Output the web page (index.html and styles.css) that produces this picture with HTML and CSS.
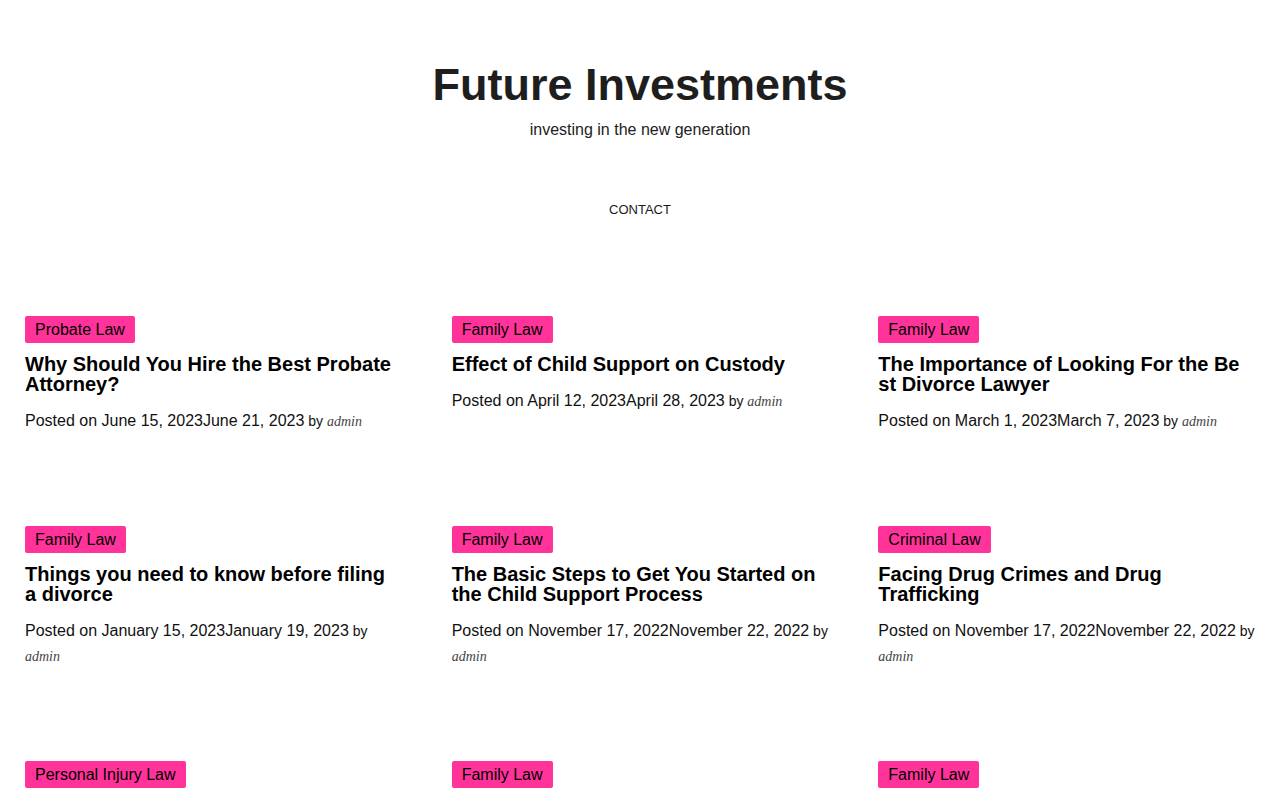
FILE: index.html
```html
<!DOCTYPE html>
<html lang="en">
<head>
<meta charset="utf-8">
<title>Future Investments</title>
<link rel="stylesheet" href="styles.css">
</head>
<body>
<header class="site-header">
  <h1 class="site-title">Future Investments</h1>
  <p class="site-tagline">investing in the new generation</p>
  <nav class="site-nav"><a href="#">CONTACT</a></nav>
</header>
<main class="posts">
  <article class="post">
    <a class="tag" href="#">Probate Law</a>
    <h2 class="post-title">Why Should You Hire the Best Probate Attorney?</h2>
    <div class="meta">Posted on June 15, 2023June 21, 2023<span class="by"> by <span class="author">admin</span></span></div>
  </article>
  <article class="post">
    <a class="tag" href="#">Family Law</a>
    <h2 class="post-title">Effect of Child Support on Custody</h2>
    <div class="meta">Posted on April 12, 2023April 28, 2023<span class="by"> by <span class="author">admin</span></span></div>
  </article>
  <article class="post">
    <a class="tag" href="#">Family Law</a>
    <h2 class="post-title">The Importance of Looking For the Be<wbr>st Divorce Lawyer</h2>
    <div class="meta">Posted on March 1, 2023March 7, 2023<span class="by"> by <span class="author">admin</span></span></div>
  </article>
  <article class="post">
    <a class="tag" href="#">Family Law</a>
    <h2 class="post-title">Things you need to know before filing a divorce</h2>
    <div class="meta">Posted on January 15, 2023January 19, 2023<span class="by"> by <span class="author">admin</span></span></div>
  </article>
  <article class="post">
    <a class="tag" href="#">Family Law</a>
    <h2 class="post-title">The Basic Steps to Get You Started on the Child Support Process</h2>
    <div class="meta">Posted on November 17, 2022November 22, 2022<span class="by"> by <span class="author">admin</span></span></div>
  </article>
  <article class="post">
    <a class="tag" href="#">Criminal Law</a>
    <h2 class="post-title">Facing Drug Crimes and Drug Trafficking</h2>
    <div class="meta">Posted on November 17, 2022November 22, 2022<span class="by"> by <span class="author">admin</span></span></div>
  </article>
  <article class="post">
    <a class="tag" href="#">Personal Injury Law</a>
    <h2 class="post-title">Understanding Personal Injury Claims</h2>
    <div class="meta">Posted on October 10, 2022October 12, 2022<span class="by"> by <span class="author">admin</span></span></div>
  </article>
  <article class="post">
    <a class="tag" href="#">Family Law</a>
    <h2 class="post-title">How Custody Decisions Are Made</h2>
    <div class="meta">Posted on September 5, 2022September 9, 2022<span class="by"> by <span class="author">admin</span></span></div>
  </article>
  <article class="post">
    <a class="tag" href="#">Family Law</a>
    <h2 class="post-title">What to Expect During Mediation</h2>
    <div class="meta">Posted on August 2, 2022August 8, 2022<span class="by"> by <span class="author">admin</span></span></div>
  </article>
</main>
</body>
</html>
```
FILE: styles.css
```css
* { box-sizing: border-box; }
html, body { margin: 0; padding: 0; background: #fff; }
body {
  font-family: "Liberation Sans", Arial, sans-serif;
  color: #1a1a1a;
}
.site-header {
  text-align: center;
  padding-top: 57px;
}
.site-title {
  margin: 0;
  font-size: 45px;
  line-height: 55px;
  font-weight: 700;
  color: #1e1e1e;
}
.site-tagline {
  margin: 6px 0 0;
  font-size: 16px;
  line-height: 24px;
  color: #222;
}
.site-nav {
  margin-top: 59px;
  font-size: 13px;
  line-height: 18px;
}
.site-nav a { color: #1a1a1a; text-decoration: none; }
.posts {
  display: grid;
  grid-template-columns: repeat(3, 1fr);
  column-gap: 50px;
  row-gap: 93px;
  padding: 97px 25px 0;
}
.post { min-width: 0; }
.tag {
  display: inline-block;
  background: #ff3399;
  color: #000;
  text-decoration: none;
  font-size: 16px;
  line-height: 19px;
  padding: 4px 10px;
  border-radius: 2px;
}
.post-title {
  margin: 11px 0 0;
  font-size: 20px;
  line-height: 20px;
  font-weight: 700;
  color: #000;
  overflow-wrap: break-word;
}
.meta {
  margin-top: 14px;
  font-size: 16px;
  line-height: 25px;
  color: #111;
}
.by { font-size: 14px; line-height: 1; }
.author {
  font-family: "Liberation Serif", "Times New Roman", serif;
  font-style: italic;
  font-size: 14px;
  line-height: 1;
  color: #444;
}
```
